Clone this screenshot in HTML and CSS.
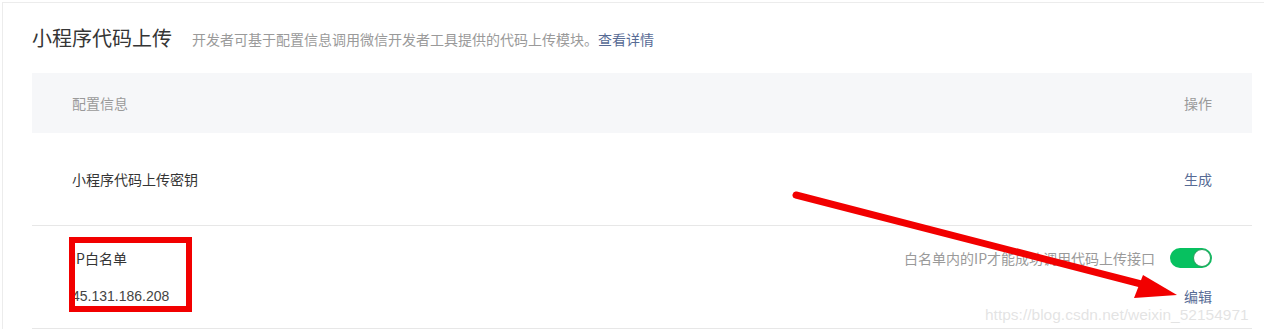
FILE: index.html
```html
<!DOCTYPE html>
<html lang="zh-CN">
<head>
<meta charset="utf-8">
<title>小程序代码上传</title>
<link rel="stylesheet" href="styles.css">
</head>
<body>
<div class="card">
  <div class="head">
    <h2 class="title">小程序代码上传</h2>
    <p class="desc">开发者可基于配置信息调用微信开发者工具提供的代码上传模块。<a class="link" href="#">查看详情</a></p>
  </div>
  <div class="table">
    <div class="row row-head">
      <span>配置信息</span>
      <span>操作</span>
    </div>
    <div class="row row-key">
      <span class="cell-text">小程序代码上传密钥</span>
      <a class="link" href="#">生成</a>
    </div>
    <div class="row row-ip">
      <div class="col-left">
        <span class="cell-text">IP白名单</span>
        <span class="cell-text ip">45.131.186.208</span>
      </div>
      <div class="col-right">
        <div class="switch-line">
          <span class="hint">白名单内的IP才能成功调用代码上传接口</span>
          <span class="switch"><span class="knob"></span></span>
        </div>
        <a class="link" href="#">编辑</a>
      </div>
    </div>
  </div>
</div>
<div class="redbox"></div>
<svg class="arrow" width="1264" height="332" viewBox="0 0 1264 332">
  <line x1="796" y1="195" x2="1145" y2="285" stroke="#f20000" stroke-width="7" stroke-linecap="round"/>
  <polygon points="1143,275 1134,298 1177,295" fill="#f20000"/>
</svg>
<div class="watermark">https://blog.csdn.net/weixin_52154971</div>
</body>
</html>
```
FILE: styles.css
```css
html, body {
  margin: 0;
  padding: 0;
  background: #ffffff;
  overflow: hidden;
}
body {
  width: 1264px;
  height: 332px;
  position: relative;
  font-family: "Noto Sans CJK SC", "Liberation Sans", sans-serif;
  color: #353535;
}
.card {
  margin: 2px 0 0 2px;
  border-top: 1px solid #ececec;
  border-left: 1px solid #ececec;
  padding: 21px 12px 0 29px;
}
.head {
  display: flex;
  align-items: center;
  height: 28px;
  gap: 20px;
}
.title {
  margin: 0;
  font-size: 20px;
  font-weight: normal;
  line-height: 28px;
  color: #353535;
}
.desc {
  margin: 0;
  font-size: 14px;
  line-height: 20px;
  color: #9a9a9a;
  padding-top: 2px;
}
.link {
  color: #576b95;
  text-decoration: none;
}
.table {
  margin-top: 21px;
  width: 1220px;
}
.row {
  display: flex;
  justify-content: space-between;
  padding: 0 40px;
  font-size: 14px;
  line-height: 20px;
}
.row-head {
  background: #f6f7f9;
  height: 60px;
  align-items: center;
  color: #9a9a9a;
}
.row-key {
  padding-top: 36px;
  padding-bottom: 36px;
  border-bottom: 1px solid #e7e7e7;
}
.row-ip {
  padding-top: 22px;
  padding-bottom: 22px;
  border-bottom: 1px solid #e7e7e7;
}
.col-left, .col-right {
  display: flex;
  flex-direction: column;
  gap: 18px;
}
.col-right {
  align-items: flex-end;
}
.ip {
  font-family: "Liberation Sans", "Noto Sans CJK SC", sans-serif;
  color: #444;
}
.switch-line {
  display: flex;
  align-items: center;
  gap: 15px;
  height: 20px;
}
.hint {
  color: #9a9a9a;
}
.switch {
  width: 42px;
  height: 20px;
  border-radius: 10px;
  background: #07c160;
  display: flex;
  justify-content: flex-end;
  align-items: center;
  box-sizing: border-box;
  padding-right: 1px;
}
.knob {
  width: 18px;
  height: 18px;
  border-radius: 50%;
  background: #ffffff;
  box-sizing: border-box;
  border: 1px solid #2a9d5c;
}
.redbox {
  position: absolute;
  left: 69px;
  top: 237px;
  width: 111px;
  height: 63px;
  border: 6px solid #f20000;
}
.arrow {
  position: absolute;
  left: 0;
  top: 0;
  pointer-events: none;
}
.watermark {
  position: absolute;
  left: 985px;
  top: 305px;
  font-family: "Liberation Sans", sans-serif;
  font-size: 15.5px;
  line-height: 20px;
  color: rgba(200, 200, 200, 0.5);
  white-space: nowrap;
}
```
